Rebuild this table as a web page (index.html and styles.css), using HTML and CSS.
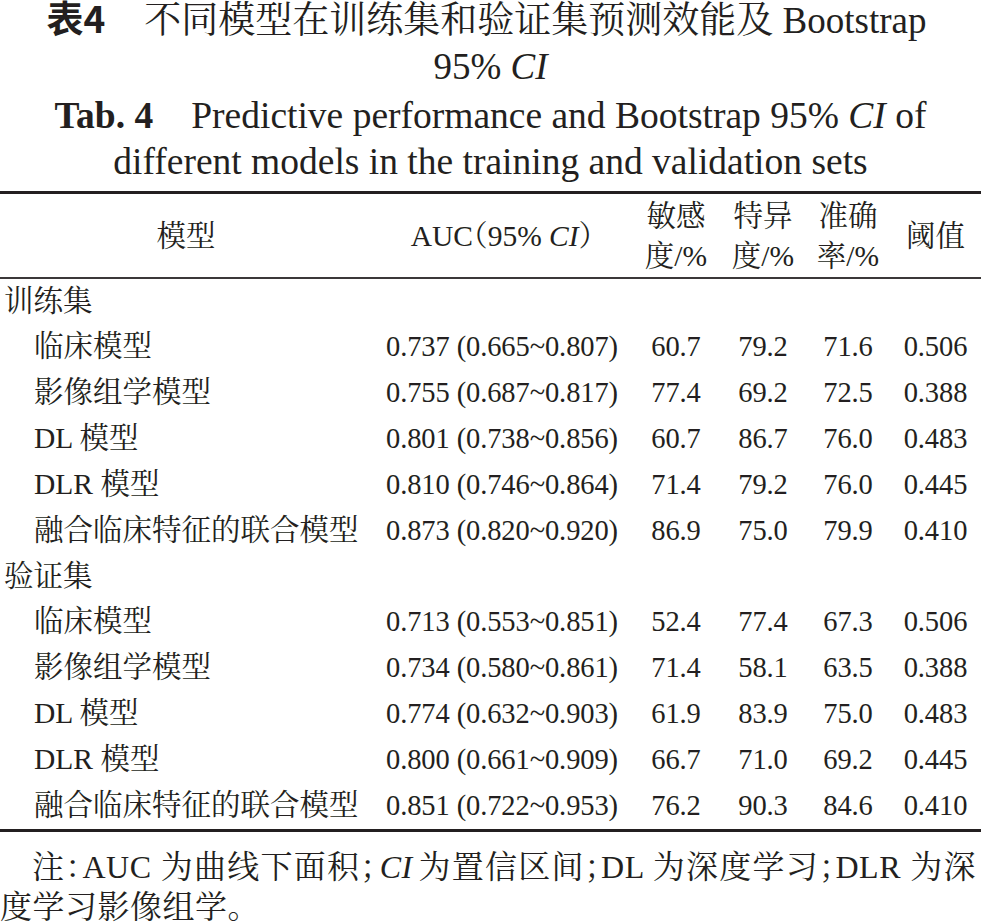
FILE: index.html
```html
<!DOCTYPE html>
<html lang="zh-CN">
<head>
<meta charset="utf-8">
<title>表4 不同模型在训练集和验证集预测效能及 Bootstrap 95% CI</title>
<link rel="stylesheet" href="styles.css">
</head>
<body>
<div class="caption">
  <p class="cap-cn"><span class="cap-no">表4</span>　不同模型在训练集和验证集预测效能及 Bootstrap<br>95% <i>CI</i></p>
  <p class="cap-en"><span class="cap-no">Tab. 4</span>Predictive performance and Bootstrap 95% <i>CI</i> of<br>different models in the training and validation sets</p>
</div>
<table class="perf">
  <colgroup>
    <col class="w-model"><col class="w-auc"><col class="w-sen"><col class="w-spe"><col class="w-acc"><col class="w-thr">
  </colgroup>
  <thead>
    <tr>
      <th>模型</th>
      <th>AUC（95% <i>CI</i>）</th>
      <th>敏感<br>度/%</th>
      <th>特异<br>度/%</th>
      <th>准确<br>率/%</th>
      <th>阈值</th>
    </tr>
  </thead>
  <tbody>
    <tr class="group"><td colspan="6">训练集</td></tr>
    <tr><td class="name">临床模型</td><td class="num">0.737 (0.665~0.807)</td><td class="num">60.7</td><td class="num">79.2</td><td class="num">71.6</td><td class="num">0.506</td></tr>
    <tr><td class="name">影像组学模型</td><td class="num">0.755 (0.687~0.817)</td><td class="num">77.4</td><td class="num">69.2</td><td class="num">72.5</td><td class="num">0.388</td></tr>
    <tr><td class="name">DL 模型</td><td class="num">0.801 (0.738~0.856)</td><td class="num">60.7</td><td class="num">86.7</td><td class="num">76.0</td><td class="num">0.483</td></tr>
    <tr><td class="name">DLR 模型</td><td class="num">0.810 (0.746~0.864)</td><td class="num">71.4</td><td class="num">79.2</td><td class="num">76.0</td><td class="num">0.445</td></tr>
    <tr><td class="name">融合临床特征的联合模型</td><td class="num">0.873 (0.820~0.920)</td><td class="num">86.9</td><td class="num">75.0</td><td class="num">79.9</td><td class="num">0.410</td></tr>
    <tr class="group"><td colspan="6">验证集</td></tr>
    <tr><td class="name">临床模型</td><td class="num">0.713 (0.553~0.851)</td><td class="num">52.4</td><td class="num">77.4</td><td class="num">67.3</td><td class="num">0.506</td></tr>
    <tr><td class="name">影像组学模型</td><td class="num">0.734 (0.580~0.861)</td><td class="num">71.4</td><td class="num">58.1</td><td class="num">63.5</td><td class="num">0.388</td></tr>
    <tr><td class="name">DL 模型</td><td class="num">0.774 (0.632~0.903)</td><td class="num">61.9</td><td class="num">83.9</td><td class="num">75.0</td><td class="num">0.483</td></tr>
    <tr><td class="name">DLR 模型</td><td class="num">0.800 (0.661~0.909)</td><td class="num">66.7</td><td class="num">71.0</td><td class="num">69.2</td><td class="num">0.445</td></tr>
    <tr><td class="name">融合临床特征的联合模型</td><td class="num">0.851 (0.722~0.953)</td><td class="num">76.2</td><td class="num">90.3</td><td class="num">84.6</td><td class="num">0.410</td></tr>
  </tbody>
</table>
<p class="note">注：AUC 为曲线下面积；<i class="ci">CI</i>为置信区间；DL 为深度学习；DLR 为深度学习影像组学。</p>
</body>
</html>
```

FILE: styles.css
```css
html, body {
  margin: 0;
  padding: 0;
  background: #ffffff;
}

body {
  color: #231f20;
  font-family: "Liberation Serif", "Noto Serif CJK SC", "Noto Sans CJK SC", serif;
  width: 981px;
}

p {
  margin: 0;
}

i {
  font-style: italic;
}

.caption {
  text-align: center;
}

.cap-cn {
  font-size: 37px;
  line-height: 46px;
  margin-top: -2px;
}

.cap-cn .cap-no {
  font-family: "Noto Sans CJK SC", sans-serif;
  font-weight: 700;
  line-height: 20px;
  margin-left: -8px;
  margin-right: 2px;
}

.cap-en {
  font-size: 37.5px;
  line-height: 46px;
  margin-top: 2.5px;
}

.cap-en .cap-no {
  font-weight: 700;
  margin-right: 38px;
}

.perf {
  width: 981px;
  table-layout: fixed;
  border-collapse: separate;
  border-spacing: 0;
  margin-top: 6px;
  font-size: 29.5px;
  font-feature-settings: "halt";
}

.w-model { width: 372px; }
.w-auc { width: 260px; }
.w-sen { width: 88px; }
.w-spe { width: 86px; }
.w-acc { width: 84px; }
.w-thr { width: 91px; }

.perf th {
  font-weight: 400;
  line-height: 40px;
  padding: 2.5px 0 0.5px;
  text-align: center;
  vertical-align: middle;
  border-top: 3px solid #231f20;
  border-bottom: 2px solid #3b3839;
  white-space: nowrap;
}

.perf td {
  line-height: 45.85px;
  padding: 0;
  text-align: center;
  vertical-align: middle;
  white-space: nowrap;
}

.perf td.num {
  font-size: 28.5px;
  letter-spacing: -0.1px;
}

.perf td.name {
  text-align: left;
  padding-left: 34px;
}

.perf tr.group td {
  text-align: left;
  padding-left: 4px;
}

.perf tbody tr:last-child td {
  border-bottom: 3px solid #231f20;
}

.note {
  font-size: 32px;
  line-height: 40px;
  margin-top: 15px;
  text-indent: 32px;
  text-align: justify;
  letter-spacing: 0.5px;
  padding-right: 5px;
  font-feature-settings: "halt";
}

.note .ci {
  margin-left: 3px;
  margin-right: 5px;
}
```
